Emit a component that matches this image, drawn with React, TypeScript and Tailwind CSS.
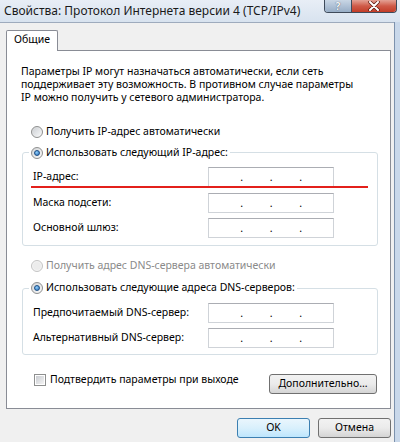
import React from "react";

function Radio({ checked, disabled, label }: { checked?: boolean; disabled?: boolean; label: string }) {
  return (
    <div className="flex items-center h-[13px] whitespace-nowrap">
      <span
        className={
          "w-[12px] h-[12px] rounded-full border shrink-0 flex items-center justify-center " +
          (disabled ? "border-[#c4c4c4] bg-[#f4f4f4]" : "border-[#8e8f8f] bg-gradient-to-br from-[#d2d4d6] to-[#fbfbfb]")
        }
      >
        {checked ? (
          <span className="w-[6px] h-[6px] rounded-full border border-[#1c4f86] bg-[radial-gradient(circle_at_40%_35%,#8fd0fb,#2a6cb8)]" />
        ) : (
          <span className={"w-[8px] h-[8px] rounded-full " + (disabled ? "bg-[#ececec]" : "bg-gradient-to-br from-[#cfd2d6] to-[#f5f6f7]")} />
        )}
      </span>
      <span className={"ml-[3px] " + (disabled ? "text-[#8a8a8a]" : "text-black")}>{label}</span>
    </div>
  );
}

function IpInput() {
  return (
    <div className="w-[126px] h-[20px] shrink-0 bg-white border border-[#cfd3d8] border-t-[#abadb3] flex items-center pl-[5px] leading-[12px]">
      <span className="w-[26px]" />
      <span className="w-[3.5px] flex justify-center">.</span>
      <span className="w-[26px]" />
      <span className="w-[3.5px] flex justify-center">.</span>
      <span className="w-[26px]" />
      <span className="w-[3.5px] flex justify-center">.</span>
      <span className="w-[26px]" />
    </div>
  );
}

function Row({ label }: { label: string }) {
  return (
    <div className="flex items-center h-[20px]">
      <span className="w-[175px] whitespace-nowrap">{label}</span>
      <IpInput />
    </div>
  );
}

function Button({ label, def, w }: { label: string; def?: boolean; w: string }) {
  return (
    <div
      className={
        "h-[20px] rounded-[3px] border flex items-center justify-center whitespace-nowrap " +
        w +
        " " +
        (def
          ? "border-[#3c7fb1] bg-gradient-to-b from-[#eaf6fd] via-[#d9f0fc] to-[#bee6fd]"
          : "border-[#707070] bg-gradient-to-b from-[#f2f2f2] via-[#ebebeb] to-[#d4d4d4]")
      }
    >
      {label}
    </div>
  );
}

export default function App() {
  return (
    <div className="relative w-[400px] h-[442px] overflow-hidden flex flex-col bg-[#d6e2ef] font-['Noto_Sans','Liberation_Sans',sans-serif] text-[10.5px] leading-[11.7px] text-black">
      {/* title bar */}
      <div className="h-[22px] shrink-0 flex items-start bg-gradient-to-b from-[#e8eef6] to-[#d8e3ef]">
        <div className="pl-[4px] pt-[3px] text-[12px] leading-[15px] text-[#1a1a1a] whitespace-nowrap">
          Свойства: Протокол Интернета версии 4 (TCP/IPv4)
        </div>
        <div className="ml-auto mr-[3px] flex h-[13px] border border-t-0 border-[#3e4a5a] rounded-b-[4px] overflow-hidden">
          <div className="w-[27px] h-full flex items-center justify-center bg-gradient-to-b from-[#c9d6e5] to-[#97adc6] border-r border-[#3e4a5a] text-[10px] leading-[10px] font-bold text-[#f4f6f9] [text-shadow:0_0_1px_#2b3a4d]">
            ?
          </div>
          <div className="w-[44px] h-full flex items-center justify-center bg-gradient-to-b from-[#e3a195] via-[#cf5a48] to-[#c23c27]">
            <svg width="12" height="10" viewBox="0 0 12 10">
              <path d="M2 1 L10 9 M10 1 L2 9" stroke="#5a1a12" strokeWidth="3.4" strokeLinecap="round" />
              <path d="M2 1 L10 9 M10 1 L2 9" stroke="#ffffff" strokeWidth="2" strokeLinecap="round" />
            </svg>
          </div>
        </div>
      </div>

      <div className="flex flex-1">
        {/* client area */}
        <div className="w-[394px] bg-[#f0f0f0] border-t border-[#9eabbd] pl-[6px] pr-[3px] pt-[7px] flex flex-col">
          <div className="relative z-10 w-[52px] h-[21px] -mb-px bg-white border border-b-0 border-[#898c95] rounded-t-[2px] pl-[7px] pt-[3px]">
            Общие
          </div>
          <div className="bg-white border border-[#898c95] flex flex-col">
            <p className="mt-[13.5px] ml-[14px] whitespace-nowrap leading-[13px]">
              Параметры IP могут назначаться автоматически, если сеть
              <br />
              поддерживает эту возможность. В противном случае параметры
              <br />
              IP можно получить у сетевого администратора.
            </p>

            <div className="mt-[22px] ml-[24px]">
              <Radio label="Получить IP-адрес автоматически" />
            </div>

            <fieldset className="mt-[7.5px] ml-[15px] w-[356px] border border-[#d5dfe5] rounded-[3px] pl-[10px] pt-[8px] pb-[7px]">
              <legend className="-ml-[4px] px-[2px]">
                <Radio checked label="Использовать следующий IP-адрес:" />
              </legend>
              <div className="flex flex-col gap-[5.5px]">
                <Row label="IP-адрес:" />
                <Row label="Маска подсети:" />
                <Row label="Основной шлюз:" />
              </div>
            </fieldset>

            <div className="mt-[13px] ml-[24px]">
              <Radio disabled label="Получить адрес DNS-сервера автоматически" />
            </div>

            <fieldset className="mt-[9.5px] ml-[15px] w-[356px] border border-[#d5dfe5] rounded-[3px] pl-[10px] pt-[8px] pb-[6px]">
              <legend className="-ml-[4px] px-[2px]">
                <Radio checked label="Использовать следующие адреса DNS-серверов:" />
              </legend>
              <div className="flex flex-col gap-[5px]">
                <Row label="Предпочитаемый DNS-сервер:" />
                <Row label="Альтернативный DNS-сервер:" />
              </div>
            </fieldset>

            <div className="mt-[19px] mb-[14px] flex items-start">
              <div className="ml-[27px] flex items-center h-[12px] whitespace-nowrap">
                <span className="w-[12px] h-[12px] border border-[#8e8f8f] bg-white flex items-center justify-center shrink-0">
                  <span className="w-[8px] h-[8px] bg-gradient-to-br from-[#c9ccd1] to-[#f4f4f4]" />
                </span>
                <span className="ml-[4px]">Подтвердить параметры при выходе</span>
              </div>
              <div className="ml-auto mr-[13px]">
                <Button label="Дополнительно..." w="w-[108px]" />
              </div>
            </div>
          </div>

          <div className="mt-[9px] flex justify-end gap-[8px]">
            <Button label="OK" def w="w-[73px]" />
            <Button label="Отмена" w="w-[73px]" />
          </div>
        </div>
        {/* right window frame */}
        <div className="flex-1 border-l border-[#7d92ad] bg-[#c9d8ea]" />
      </div>

      {/* red annotation line */}
      <div className="absolute left-[31px] top-[186px] w-[337px] h-[2px] bg-[#e3201b]" />
    </div>
  );
}
